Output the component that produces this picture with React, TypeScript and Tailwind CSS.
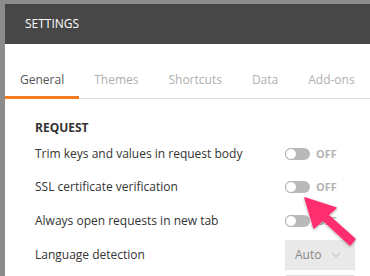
import React from "react";
import { ChevronDown } from "lucide-react";

const rows = [
  { label: "Trim keys and values in request body" },
  { label: "SSL certificate verification" },
  { label: "Always open requests in new tab" },
];

const tabs = ["General", "Themes", "Shortcuts", "Data", "Add-ons"];

const Toggle: React.FC = () => (
  <div className="flex items-center gap-[6px]">
    <div className="relative h-[12px] w-[25px] rounded-full bg-[#b9b9b9]">
      <div className="absolute left-0 top-0 h-[12px] w-[12px] rounded-full border border-[#b0b0b0] bg-white" />
    </div>
    <span className="text-[11px] font-bold text-[#b3b3b3]">OFF</span>
  </div>
);

export default function App() {
  return (
    <div
      className="relative h-[276px] w-[370px] overflow-hidden bg-[#8c8c8c] pl-[5px] pt-[4px]"
      style={{ fontFamily: '"Open Sans", "Noto Sans", sans-serif' }}
    >
      <div className="w-[380px] bg-white">
        {/* Header */}
        <div className="flex h-[40px] items-center bg-[#474747] pl-[20px] text-[12px] text-white">
          SETTINGS
        </div>

        {/* Tabs */}
        <div className="flex border-b border-[#dedede] pt-[27px]">
          {tabs.map((t, i) => (
            <div
              key={t}
              className={`-mb-px shrink-0 whitespace-nowrap px-[15px] pb-[8px] text-[12px] leading-[17px] ${
                i === 0 ? "border-b-[3px] border-[#f47b20] text-[#555]" : "border-b-[3px] border-transparent text-[#b0b0b0]"
              }`}
            >
              {t}
            </div>
          ))}
        </div>

        {/* Body */}
        <div className="pl-[30px] pt-[20px] text-[12px] text-[#333]">
          <div className="text-[12px] font-bold leading-[17px]">REQUEST</div>
          <div className="h-[1px]" />
          {rows.map((r) => (
            <div key={r.label} className="flex h-[33.5px] items-center">
              <div className="w-[250px]">{r.label}</div>
              <Toggle />
            </div>
          ))}
          <div className="flex h-[34px] items-center">
            <div className="w-[250px]">Language detection</div>
            <div className="flex h-[30px] w-[70px] items-center justify-between bg-[#e9e9e9] pl-[10px] pr-[12px] text-[#888]">
              <span>Auto</span>
              <ChevronDown className="h-[14px] w-[14px] text-[#aaa]" strokeWidth={1.5} />
            </div>
          </div>
          <div className="ml-[250px] mt-[3px] h-[20px] w-[70px] rounded-[2px] border border-[#ddd]" />
        </div>
      </div>

      {/* Pink arrow annotation */}
      <svg className="absolute left-0 top-0" width="370" height="276" viewBox="0 0 370 276">
        <defs>
          <filter id="sh" x="-20%" y="-20%" width="140%" height="140%">
            <feDropShadow dx="0" dy="1" stdDeviation="1.5" floodColor="#000" floodOpacity="0.35" />
          </filter>
        </defs>
        <path
          d="M305 198 L336 208 L328 215 L355 239 L350 245 L323 220 L314 228 Z"
          fill="#ff2d6e"
          stroke="#ff2d6e"
          strokeWidth="1.5"
          strokeLinejoin="round"
          filter="url(#sh)"
        />
      </svg>
    </div>
  );
}
